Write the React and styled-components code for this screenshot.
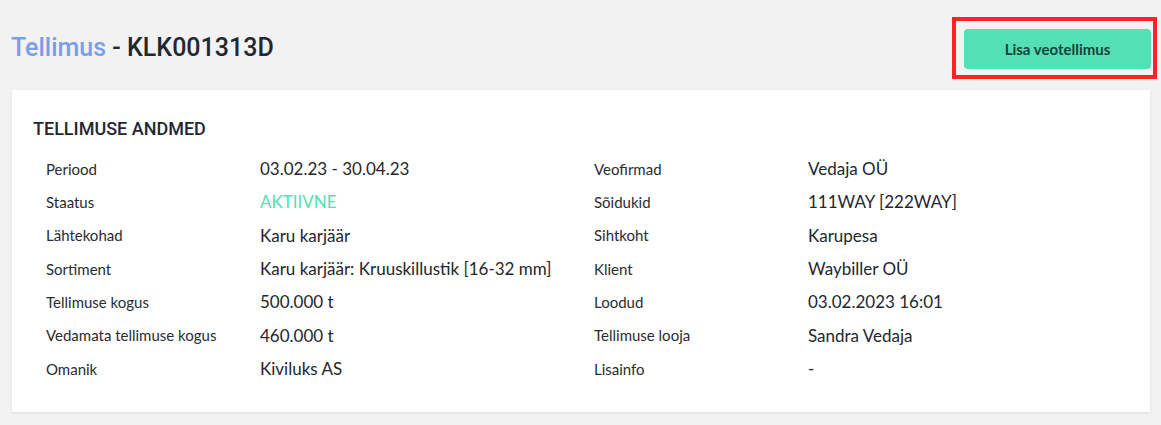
import React from "react";
import styled, { createGlobalStyle } from "styled-components";

const Global = createGlobalStyle`
  html, body { margin: 0; padding: 0; background: #f2f2f2; }
  body { font-family: Lato, "Noto Sans", sans-serif; color: #24272d; }
`;

const Page = styled.div`
  padding: 17px 11px 12px 12px;
`;

const Header = styled.div`
  display: flex;
  align-items: center;
  justify-content: space-between;
  margin-right: -7px;
  margin-bottom: 11px;
`;

const Title = styled.h1`
  margin: 0 0 0 -1px;
  font-family: Roboto, "Noto Sans", sans-serif;
  font-weight: 500;
  font-size: 25px;
  line-height: 30px;
  color: #23272f;
`;

const TitleLink = styled.span`
  color: #7c9ee2;
`;

const Highlight = styled.div`
  border: 4px solid #ff2222;
  padding: 8px 2px 6px 8px;
`;

const Button = styled.button`
  display: block;
  width: 187px;
  height: 40px;
  border: none;
  border-radius: 4px;
  background: #53e0b5;
  color: #15453a;
  font-family: Lato, "Noto Sans", sans-serif;
  font-weight: 700;
  font-size: 15px;
  cursor: pointer;
`;

const Card = styled.section`
  background: #ffffff;
  padding: 28px 21px 27px 21px;
  box-shadow: 0 1px 3px rgba(0, 0, 0, 0.08);
`;

const CardTitle = styled.h2`
  margin: 0 0 12px 0;
  font-family: Roboto, "Noto Sans", sans-serif;
  font-weight: 500;
  font-size: 18px;
  line-height: 22px;
  color: #23272f;
`;

const Columns = styled.div`
  display: grid;
  grid-template-columns: 1fr 1fr;
`;

const List = styled.dl`
  margin: 0;
  padding-left: 13px;
`;

const Row = styled.div`
  display: grid;
  grid-template-columns: 214px 1fr;
  align-items: center;
  height: 33.33px;
`;

const Label = styled.dt`
  font-size: 15px;
  color: #2a2c30;
`;

const Value = styled.dd`
  margin: 0;
  font-size: 17px;
  color: ${(p) => (p.$status ? "#53e0b5" : "#23272f")};
`;

const left = [
  ["Periood", "03.02.23 - 30.04.23"],
  ["Staatus", "AKTIIVNE", true],
  ["Lähtekohad", "Karu karjäär"],
  ["Sortiment", "Karu karjäär: Kruuskillustik [16-32 mm]"],
  ["Tellimuse kogus", "500.000 t"],
  ["Vedamata tellimuse kogus", "460.000 t"],
  ["Omanik", "Kiviluks AS"],
];

const right = [
  ["Veofirmad", "Vedaja OÜ"],
  ["Sõidukid", "111WAY [222WAY]"],
  ["Sihtkoht", "Karupesa"],
  ["Klient", "Waybiller OÜ"],
  ["Loodud", "03.02.2023 16:01"],
  ["Tellimuse looja", "Sandra Vedaja"],
  ["Lisainfo", "-"],
];

const Fields = ({ items }) => (
  <List>
    {items.map(([l, v, s]) => (
      <Row key={l}>
        <Label>{l}</Label>
        <Value $status={s}>{v}</Value>
      </Row>
    ))}
  </List>
);

export default function App() {
  return (
    <Page>
      <Global />
      <Header>
        <Title>
          <TitleLink>Tellimus</TitleLink> - KLK001313D
        </Title>
        <Highlight>
          <Button>Lisa veotellimus</Button>
        </Highlight>
      </Header>
      <Card>
        <CardTitle>TELLIMUSE ANDMED</CardTitle>
        <Columns>
          <Fields items={left} />
          <Fields items={right} />
        </Columns>
      </Card>
    </Page>
  );
}
